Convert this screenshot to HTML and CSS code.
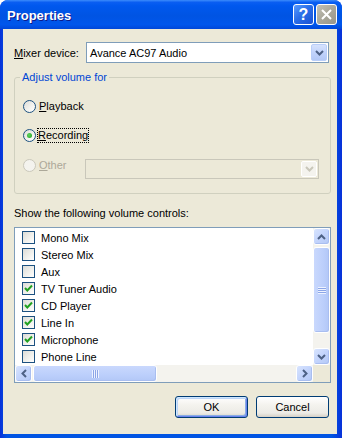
FILE: index.html
```html
<!DOCTYPE html>
<html lang="en">
<head>
    <meta charset="UTF-8">
    <title>Properties</title>
    <link rel="stylesheet" href="styles.css">
</head>
<body>
    <div class="window">
        <div class="titlebar">
            <span class="title">Properties</span>
            <span class="cap-btn cap-help">?</span>
            <span class="cap-btn cap-close">
                <svg width="13" height="13" viewBox="0 0 13 13"><path d="M2 2 L11 11 M11 2 L2 11" stroke="#fff" stroke-width="2" fill="none"/></svg>
            </span>
        </div>

        <div class="client">
            <div class="mixer-row">
                <span class="mixer-label"><u>M</u>ixer device:</span>
                <div class="combo">
                    <span class="combo-text">Avance AC97 Audio</span>
                    <span class="drop-btn">
                        <svg width="9" height="6" viewBox="0 0 9 6"><path d="M1 1 L4.5 4.5 L8 1" stroke="#4d6185" stroke-width="2" fill="none"/></svg>
                    </span>
                </div>
            </div>

            <fieldset class="group">
                <legend>Adjust volume for</legend>
                <div class="radio-row first">
                    <span class="radio"></span>
                    <span class="radio-label"><u>P</u>layback</span>
                </div>
                <div class="radio-row second">
                    <span class="radio checked"><span class="dot"></span></span>
                    <span class="radio-label focus"><u>R</u>ecording</span>
                </div>
                <div class="radio-row third">
                    <span class="radio disabled"></span>
                    <span class="radio-label disabled"><u>O</u>ther</span>
                    <div class="combo combo-disabled">
                        <span class="combo-text"></span>
                        <span class="drop-btn">
                            <svg width="9" height="6" viewBox="0 0 9 6"><path d="M1 1 L4.5 4.5 L8 1" stroke="#c9c7ba" stroke-width="2" fill="none"/></svg>
                        </span>
                    </div>
                </div>
            </fieldset>

            <div class="show-label">Show the following volume controls:</div>

            <div class="listbox">
                <div class="list-items">
                    <div class="item"><span class="check"></span>Mono Mix</div>
                    <div class="item"><span class="check"></span>Stereo Mix</div>
                    <div class="item"><span class="check"></span>Aux</div>
                    <div class="item"><span class="check on"><svg width="11" height="11" viewBox="0 0 11 11"><path d="M2 5 L4.3 7.5 L9 2.5" stroke="#21a121" stroke-width="2" fill="none"/></svg></span>TV Tuner Audio</div>
                    <div class="item"><span class="check on"><svg width="11" height="11" viewBox="0 0 11 11"><path d="M2 5 L4.3 7.5 L9 2.5" stroke="#21a121" stroke-width="2" fill="none"/></svg></span>CD Player</div>
                    <div class="item"><span class="check on"><svg width="11" height="11" viewBox="0 0 11 11"><path d="M2 5 L4.3 7.5 L9 2.5" stroke="#21a121" stroke-width="2" fill="none"/></svg></span>Line In</div>
                    <div class="item"><span class="check on"><svg width="11" height="11" viewBox="0 0 11 11"><path d="M2 5 L4.3 7.5 L9 2.5" stroke="#21a121" stroke-width="2" fill="none"/></svg></span>Microphone</div>
                    <div class="item"><span class="check"></span>Phone Line</div>
                </div>

                <div class="vscroll">
                    <span class="sb-btn">
                        <svg width="9" height="6" viewBox="0 0 9 6"><path d="M1 5 L4.5 1.5 L8 5" stroke="#4d6185" stroke-width="2" fill="none"/></svg>
                    </span>
                    <span class="sb-thumb v-thumb"><span class="grip-v"></span></span>
                    <span class="sb-track"></span>
                    <span class="sb-btn">
                        <svg width="9" height="6" viewBox="0 0 9 6"><path d="M1 1 L4.5 4.5 L8 1" stroke="#4d6185" stroke-width="2" fill="none"/></svg>
                    </span>
                </div>

                <div class="hscroll">
                    <span class="sb-btn">
                        <svg width="6" height="9" viewBox="0 0 6 9"><path d="M5 1 L1.5 4.5 L5 8" stroke="#4d6185" stroke-width="2" fill="none"/></svg>
                    </span>
                    <span class="sb-thumb h-thumb"><span class="grip-h"></span></span>
                    <span class="sb-track"></span>
                    <span class="sb-btn">
                        <svg width="6" height="9" viewBox="0 0 6 9"><path d="M1 1 L4.5 4.5 L1 8" stroke="#4d6185" stroke-width="2" fill="none"/></svg>
                    </span>
                </div>

                <div class="corner"></div>
            </div>

            <div class="buttons">
                <button class="btn btn-default">OK</button>
                <button class="btn">Cancel</button>
            </div>
        </div>
    </div>
</body>
</html>
```

FILE: styles.css
```css
body {
    margin: 0;
    background: #fff;
    font-family: 'Liberation Sans', Arial, sans-serif;
    font-size: 11px;
    color: #000;
}

.window {
    width: 342px;
    height: 438px;
    display: flex;
    flex-direction: column;
    background: linear-gradient(to right, #0831d9 0%, #0054e3 2%, #0054e3 97%, #0831d9 100%);
    border-radius: 8px 8px 0 0;
    overflow: hidden;
}

.titlebar {
    height: 29px;
    flex: none;
    display: flex;
    align-items: center;
    gap: 2px;
    padding: 0 5px 0 7px;
    background: linear-gradient(to bottom, #3c8cfb 0%, #0a5ef2 8%, #0058ee 20%, #0054e3 55%, #0056ec 85%, #0047d8 100%);
}

.title {
    flex: 1;
    color: #fff;
    font-weight: bold;
    font-size: 13px;
    text-shadow: 1px 1px #0c1a8c;
    margin-top: 1px;
}

.cap-btn {
    width: 21px;
    height: 21px;
    box-sizing: border-box;
    border: 1px solid #fff;
    border-radius: 3px;
    display: flex;
    align-items: center;
    justify-content: center;
}

.cap-help {
    background: linear-gradient(135deg, #5a9bff 0%, #2a6ee8 45%, #1c52d4 100%);
    color: #fff;
    font-weight: bold;
    font-size: 16px;
}

.cap-close {
    background: linear-gradient(135deg, #c3c1b5 0%, #a9a79a 50%, #98968a 100%);
}

.client {
    flex: 1;
    margin: 0 5px 4px 3px;
    padding: 13px 6px 0 11px;
    background: #ece9d8;
}

/* mixer device */

.mixer-row {
    display: flex;
    align-items: center;
    height: 21px;
}

.mixer-label {
    width: 72px;
}

.combo {
    width: 243px;
    height: 21px;
    box-sizing: border-box;
    border: 1px solid #7f9db9;
    background: #fff;
    display: flex;
    align-items: center;
}

.combo-text {
    flex: 1;
    padding-left: 3px;
}

.drop-btn {
    width: 16px;
    height: 17px;
    margin-right: 1px;
    box-sizing: border-box;
    border: 1px solid #b9cef9;
    border-radius: 2px;
    background: linear-gradient(to bottom, #d6e2fd 0%, #c1d3fb 50%, #b3c8f6 100%);
    display: flex;
    align-items: center;
    justify-content: center;
}

/* group box */

.group {
    width: 317px;
    box-sizing: border-box;
    margin: 8px 0 0;
    padding: 0 0 14px 0;
    border: 1px solid #d0d0bf;
    border-radius: 3px;
}

.group legend {
    margin-left: 5px;
    padding: 0 2px;
    color: #0046d5;
    line-height: 13px;
}

.radio-row {
    display: flex;
    align-items: center;
    height: 20px;
    padding-left: 8px;
}

.radio-row.first { margin-top: 12px; }
.radio-row.second { margin-top: 9px; }
.radio-row.third {
    margin-top: 14px;
    align-items: flex-start;
}

.radio {
    width: 13px;
    height: 13px;
    box-sizing: border-box;
    border: 1px solid #1c5180;
    border-radius: 50%;
    background: linear-gradient(135deg, #dcdcd7 0%, #f4f4f0 60%, #fff 100%);
    display: flex;
    align-items: center;
    justify-content: center;
    flex: none;
}

.radio.disabled {
    border-color: #cac8bb;
    background: #f4f3ee;
}

.dot {
    width: 5px;
    height: 5px;
    border-radius: 50%;
    background: radial-gradient(circle at 40% 40%, #5ed35e, #21a121);
}

.radio-label {
    margin-left: 3px;
    line-height: 13px;
}

.radio-label.focus {
    margin-left: 2px;
    outline: 1px dotted #000;
    outline-offset: 0;
    border: 0;
}

.radio-label.disabled {
    color: #aca899;
}

.combo-disabled {
    width: 234px;
    height: 20px;
    margin-left: auto;
    margin-right: 11px;
    border-color: #c9c7ba;
    background: #ece9d8;
}

.combo-disabled .drop-btn {
    height: 16px;
    border-color: #fff;
    background: #f4f3ee;
}

/* list of controls */

.show-label {
    margin-top: 13px;
    line-height: 13px;
}

.listbox {
    width: 317px;
    height: 156px;
    box-sizing: border-box;
    margin-top: 7px;
    border: 1px solid #7f9db9;
    background: #fff;
    display: grid;
    grid-template-columns: 1fr 17px;
    grid-template-rows: 1fr 17px;
}

.list-items {
    padding: 1px 0 0 7px;
    overflow: hidden;
}

.item {
    height: 17px;
    display: flex;
    align-items: center;
    white-space: nowrap;
}

.check {
    width: 13px;
    height: 13px;
    box-sizing: border-box;
    border: 1px solid #1c5180;
    background: linear-gradient(135deg, #dcdcd7 0%, #f2f2ee 60%, #fff 100%);
    margin-right: 6px;
    display: flex;
    align-items: center;
    justify-content: center;
    flex: none;
}

.vscroll {
    display: flex;
    flex-direction: column;
    background: #f4f3ee;
}

.hscroll {
    display: flex;
    background: #f4f3ee;
}

.sb-btn {
    width: 17px;
    height: 17px;
    box-sizing: border-box;
    flex: none;
    border: 1px solid #fff;
    border-radius: 3px;
    background: linear-gradient(135deg, #d8e4fe 0%, #c3d4fc 50%, #b4c9f6 100%);
    box-shadow: inset -1px -1px 0 #a9bef0;
    display: flex;
    align-items: center;
    justify-content: center;
}

.sb-track {
    flex: 1;
}

.sb-thumb {
    box-sizing: border-box;
    border: 1px solid #fff;
    border-radius: 3px;
    background: linear-gradient(to right, #c9d8fd 0%, #bccffb 60%, #b2c7f7 100%);
    box-shadow: inset -1px -1px 0 #a9bef0;
    display: flex;
    align-items: center;
    justify-content: center;
}

.v-thumb {
    height: 86px;
    margin-top: 2px;
}

.h-thumb {
    width: 124px;
    margin-left: 1px;
    background: linear-gradient(to bottom, #c9d8fd 0%, #bccffb 60%, #b2c7f7 100%);
}

.grip-v {
    width: 8px;
    height: 7px;
    background: repeating-linear-gradient(to bottom, #eef3ff 0, #eef3ff 1px, #8ca6e8 1px, #8ca6e8 2px);
}

.grip-h {
    width: 7px;
    height: 8px;
    background: repeating-linear-gradient(to right, #eef3ff 0, #eef3ff 1px, #8ca6e8 1px, #8ca6e8 2px);
}

.corner {
    background: #ece9d8;
}

/* buttons */

.buttons {
    display: flex;
    justify-content: flex-end;
    gap: 8px;
    margin: 13px 2px 0 0;
}

.btn {
    width: 73px;
    height: 22px;
    border: 1px solid #003c74;
    border-radius: 3px;
    background: linear-gradient(to bottom, #fff 0%, #f4f3ee 40%, #ecebe6 80%, #d6d0c5 100%);
    font-family: 'Liberation Sans', Arial, sans-serif;
    font-size: 11px;
    color: #000;
    padding: 0;
}

.btn-default {
    box-shadow: inset 1px 1px 0 #cee7ff, inset -1px -1px 0 #6982ee, inset 2px 2px 0 #bcd4f6, inset -2px -2px 0 #89ade4;
}
```
